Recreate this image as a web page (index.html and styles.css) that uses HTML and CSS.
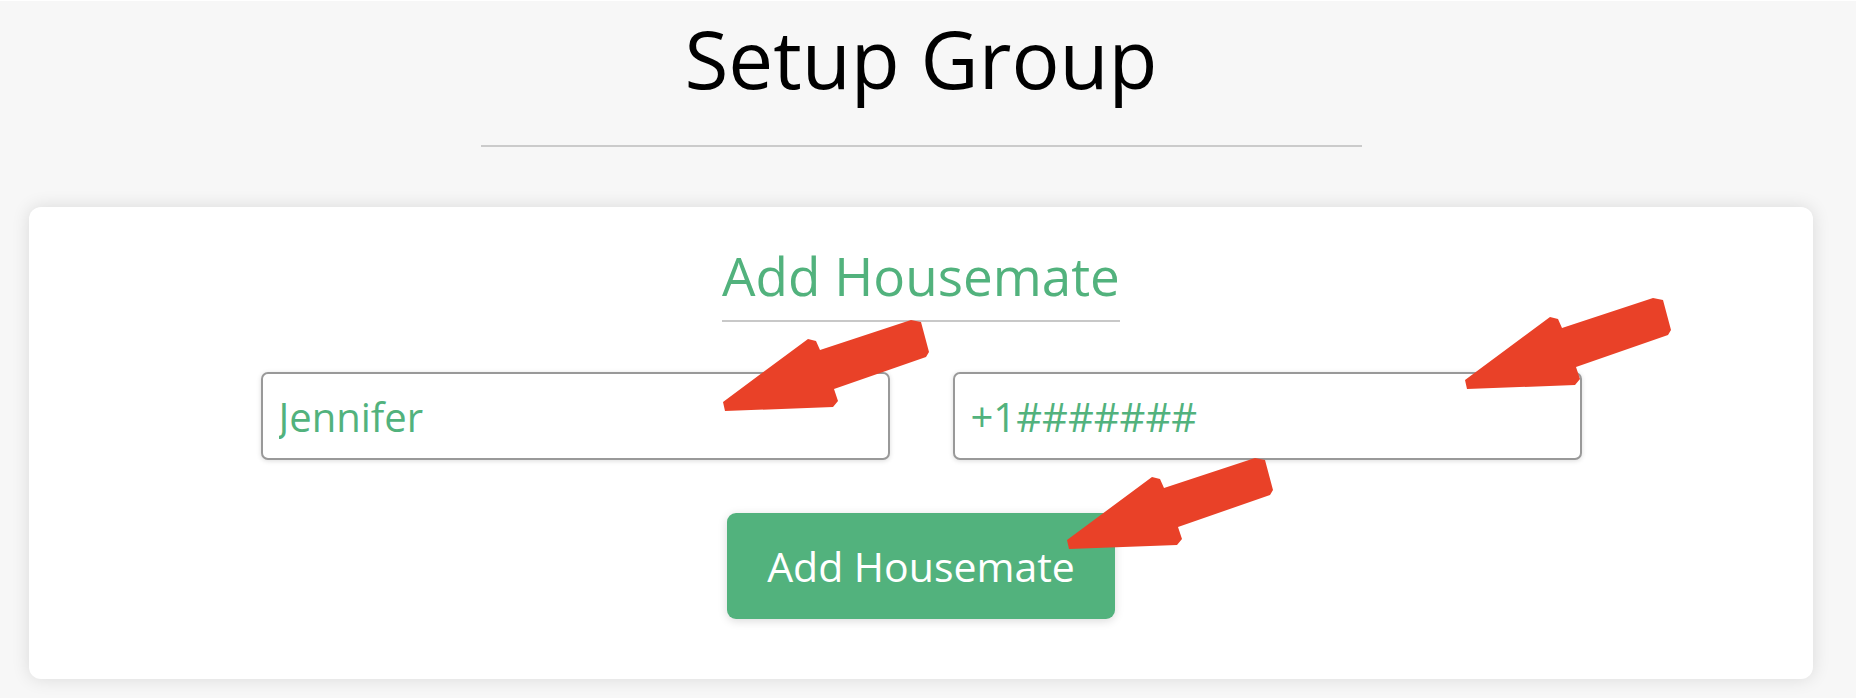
FILE: index.html
```html
<!DOCTYPE html>
<html lang="en">
<head>
<meta charset="utf-8">
<title>Setup Group</title>
<link rel="stylesheet" href="styles.css">
</head>
<body>
<div class="page">
  <h1 class="title">Setup Group</h1>
  <div class="title-rule"></div>
  <section class="card">
    <div class="heading-wrap">
      <h2 class="heading">Add Housemate</h2>
    </div>
    <div class="fields">
      <input class="field" type="text" value="Jennifer">
      <input class="field" type="text" value="+1#######">
    </div>
    <div class="actions">
      <button class="btn" type="button">Add Housemate</button>
    </div>
  </section>
</div>
<svg class="annotations" width="1856" height="698" viewBox="0 0 1856 698" xmlns="http://www.w3.org/2000/svg">
  <defs>
    <polygon id="arrow" points="723,402 808,339 816,341 820,350 911,320 921,322 929,352 926,357 834,389 838,401 833,407 725,411"/>
  </defs>
  <use href="#arrow" fill="#e94128"/>
  <use href="#arrow" fill="#e94128" transform="translate(742,-22)"/>
  <use href="#arrow" fill="#e94128" transform="translate(344,138)"/>
</svg>
</body>
</html>
```
FILE: styles.css
```css
html, body {
  margin: 0;
  padding: 0;
  background: #f7f7f7;
  height: 698px;
  overflow: hidden;
}

body {
  position: relative;
  font-family: "Open Sans", "Noto Sans", sans-serif;
}

.page {
  border-top: 1px solid #ffffff;
  padding: 0 43px 0 29px;
}

.title {
  margin: 0;
  padding-top: 9px;
  font-size: 80px;
  line-height: 96px;
  font-weight: 400;
  color: #000;
  text-align: center;
}

.title-rule {
  width: 881px;
  height: 2px;
  background: #cbcbcb;
  margin: 39px auto 0;
}

.card {
  margin-top: 60px;
  background: #ffffff;
  border-radius: 12px;
  box-shadow: 0 0 18px rgba(0, 0, 0, 0.12);
  padding: 37px 0 60px;
}

.heading-wrap {
  display: flex;
  justify-content: center;
}

.heading {
  margin: 0;
  font-size: 53px;
  line-height: 64px;
  font-weight: 400;
  color: #52b27d;
  padding-bottom: 12px;
  border-bottom: 2px solid #c8c8c8;
}

.fields {
  display: flex;
  justify-content: center;
  gap: 63px;
  margin-top: 50px;
}

.field {
  box-sizing: border-box;
  width: 629px;
  height: 88px;
  margin: 0;
  padding: 0 16px;
  border: 2px solid #999999;
  border-radius: 7px;
  background: #fff;
  box-shadow: 0 1px 5px rgba(0, 0, 0, 0.14);
  font-family: "Open Sans", "Noto Sans", sans-serif;
  font-size: 40px;
  color: #52b27d;
  outline: none;
}

.actions {
  display: flex;
  justify-content: center;
  margin-top: 53px;
}

.btn {
  box-sizing: border-box;
  width: 388px;
  height: 106px;
  margin: 0;
  padding: 0;
  border: none;
  border-radius: 9px;
  background: #52b27d;
  color: #ffffff;
  font-family: "Open Sans", "Noto Sans", sans-serif;
  font-size: 41px;
  box-shadow: 0 2px 10px rgba(0, 0, 0, 0.15);
}

.annotations {
  position: absolute;
  top: 0;
  left: 0;
  pointer-events: none;
}
```
